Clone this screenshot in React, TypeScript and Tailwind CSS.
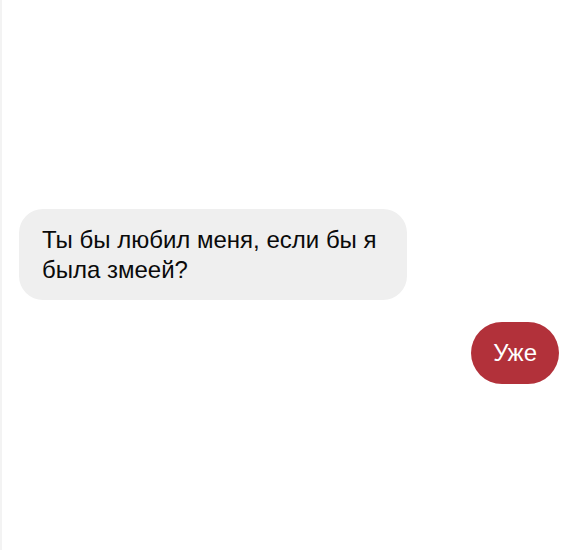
const App = () => {
  return (
    <div className="w-[576px] h-[550px] bg-white border-l-2 border-[#f3f3f3] font-['Liberation_Sans',Arial,sans-serif] text-[24px] leading-[30px]">
      <div className="flex flex-col pt-[209px] pl-[17px] pr-[17px]">
        {/* incoming */}
        <div className="self-start w-[388px] bg-[#efefef] rounded-[24px] px-[23px] py-[15.5px] text-[#0a0a0a]">
          Ты бы любил меня, если бы я была змеей?
        </div>

        {/* outgoing */}
        <div className="self-end mt-[22px] h-[62px] px-[22px] flex items-center rounded-full bg-[#b2313a] text-white">
          Уже
        </div>
      </div>
    </div>
  );
};

export default App;
